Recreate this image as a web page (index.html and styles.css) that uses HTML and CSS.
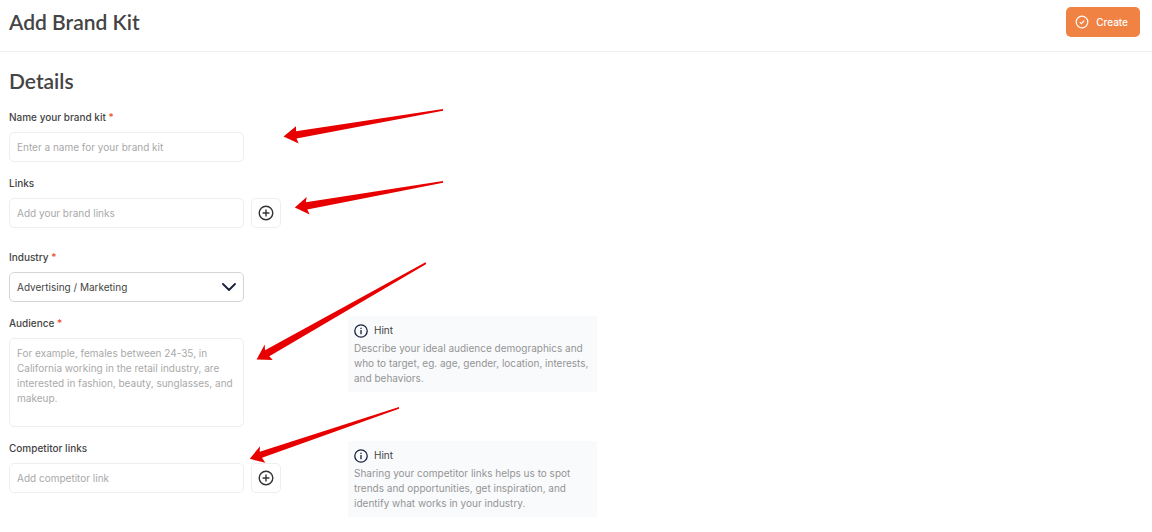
FILE: index.html
```html
<!DOCTYPE html>
<html lang="en">
<head>
    <meta charset="UTF-8">
    <meta name="viewport" content="width=device-width, initial-scale=1.0">
    <title>Add Brand Kit</title>
    <link rel="stylesheet" href="styles.css">
</head>
<body>
    <header class="topbar">
        <h1>Add Brand Kit</h1>
        <button type="submit" form="brand-kit" class="create">
            <svg width="14" height="14" viewBox="0 0 14 14" fill="none" stroke="currentColor" stroke-width="1.2">
                <circle cx="7" cy="7" r="5.8"/>
                <path d="M4.8 7.1l1.6 1.5 2.8-3"/>
            </svg>
            Create
        </button>
    </header>

    <main>
        <h2>Details</h2>
        <form id="brand-kit">
            <div class="row">
                <div class="field">
                    <label for="name">Name your brand kit <span class="required">*</span></label>
                    <input type="text" id="name" placeholder="Enter a name for your brand kit">
                </div>
            </div>

            <div class="row links">
                <div class="field">
                    <label for="links">Links</label>
                    <div class="with-add">
                        <input type="text" id="links" placeholder="Add your brand links">
                        <button type="button" class="add" aria-label="Add link">
                            <svg width="16" height="16" viewBox="0 0 16 16" fill="none" stroke="currentColor" stroke-width="1.4">
                                <circle cx="8" cy="8" r="6.8"/>
                                <path d="M8 4.6v6.8M4.6 8h6.8"/>
                            </svg>
                        </button>
                    </div>
                </div>
            </div>

            <div class="row">
                <div class="field">
                    <label for="industry">Industry <span class="required">*</span></label>
                    <div class="select">
                        <select id="industry">
                            <option>Advertising / Marketing</option>
                        </select>
                        <svg width="14" height="8" viewBox="0 0 14 8" fill="none" stroke="#18203a" stroke-width="1.8" stroke-linecap="round" stroke-linejoin="round">
                            <path d="M1 1l6 6 6-6"/>
                        </svg>
                    </div>
                </div>
            </div>

            <div class="row">
                <div class="field">
                    <label for="audience">Audience <span class="required">*</span></label>
                    <textarea id="audience" placeholder="For example, females between 24-35, in California working in the retail industry, are interested in fashion, beauty, sunglasses, and makeup."></textarea>
                </div>
                <aside class="hint">
                    <h3>
                        <svg width="14" height="14" viewBox="0 0 14 14" fill="none" stroke="currentColor" stroke-width="1.3">
                            <circle cx="7" cy="7" r="6.2"/>
                            <path d="M7 6v4.2M7 3.7v1.4"/>
                        </svg>
                        Hint
                    </h3>
                    <p>Describe your ideal audience demographics and who to target, eg. age, gender, location, interests, and behaviors.</p>
                </aside>
            </div>

            <div class="row">
                <div class="field">
                    <label for="competitors">Competitor links</label>
                    <div class="with-add">
                        <input type="text" id="competitors" placeholder="Add competitor link">
                        <button type="button" class="add" aria-label="Add competitor link">
                            <svg width="16" height="16" viewBox="0 0 16 16" fill="none" stroke="currentColor" stroke-width="1.4">
                                <circle cx="8" cy="8" r="6.8"/>
                                <path d="M8 4.6v6.8M4.6 8h6.8"/>
                            </svg>
                        </button>
                    </div>
                </div>
                <aside class="hint">
                    <h3>
                        <svg width="14" height="14" viewBox="0 0 14 14" fill="none" stroke="currentColor" stroke-width="1.3">
                            <circle cx="7" cy="7" r="6.2"/>
                            <path d="M7 6v4.2M7 3.7v1.4"/>
                        </svg>
                        Hint
                    </h3>
                    <p>Sharing your competitor links helps us to spot trends and opportunities, get inspiration, and identify what works in your industry.</p>
                </aside>
            </div>
        </form>
    </main>

    <!-- arrows pointing at the fields -->
    <svg class="arrows" width="460" height="480" viewBox="0 0 460 480" fill="#e80000" aria-hidden="true">
        <path d="M283.5 136.5L296 126.3V131.3L443 109V110.8L296.5 138.5L298.7 143.4Z"/>
        <path d="M294.8 207.6L306.7 197L305.8 202.3L443 181V182.8L307.3 209.5L309.7 214.5Z"/>
        <path d="M256.6 359.4L264.7 344.5L265 350.3L425.5 262.3L426.3 264L269.3 356.3L272.7 360Z"/>
        <path d="M249.8 458.8L260 446.2L259.7 451.7L399 407V408.8L262 457.7L265.3 462.8Z"/>
    </svg>
</body>
</html>
```
FILE: styles.css
```css
* {
    box-sizing: border-box;
}

body {
    margin: 0;
    font-family: 'Inter', sans-serif;
    font-size: 10px;
    color: #444;
    background-color: #fff;
}

h1, h2, h3, p {
    margin: 0;
}

h1, h2 {
    font-family: 'Lato', sans-serif;
    font-size: 21px;
    line-height: 28px;
    font-weight: 600;
}

/* header */
.topbar {
    display: flex;
    justify-content: space-between;
    align-items: center;
    padding: 7px 12px 14px 9px;
    border-bottom: 1px solid #eeeeee;
}

.create {
    display: flex;
    align-items: center;
    gap: 7px;
    height: 30px;
    padding: 0 12px 0 9px;
    border: 0;
    border-radius: 5px;
    background-color: #f08243;
    color: #fff;
    font: 500 10px 'Inter', sans-serif;
    cursor: pointer;
}

/* form */
main {
    padding: 15px 9px;
}

form {
    display: flex;
    flex-direction: column;
    gap: 13px;
    margin-top: 14px;
}

.row {
    display: flex;
    align-items: flex-start;
    gap: 67px;
}

.links {
    margin-bottom: 8px;
}

.field {
    display: flex;
    flex-direction: column;
    gap: 7px;
    width: 272px;
}

label {
    line-height: 16px;
    font-weight: 500;
}

.required {
    color: #f04a23;
}

input, select, textarea {
    display: block;
    width: 235px;
    height: 30px;
    padding: 0 7px;
    border: 1px solid #eeeef1;
    border-radius: 5px;
    background-color: #fff;
    color: #444;
    font: 10px 'Inter', sans-serif;
}

textarea {
    height: 89px;
    padding: 7px;
    line-height: 15px;
    resize: none;
}

::placeholder {
    color: #a9a9a9;
}

.with-add {
    display: flex;
    gap: 7px;
}

.add {
    display: flex;
    align-items: center;
    justify-content: center;
    width: 30px;
    height: 30px;
    padding: 0;
    border: 1px solid #eeeef1;
    border-radius: 5px;
    background-color: #fff;
    color: #333;
    cursor: pointer;
}

.select {
    display: grid;
    align-items: center;
    width: 235px;
}

.select select, .select svg {
    grid-area: 1 / 1;
}

.select select {
    appearance: none;
    border-color: #d5d5d5;
}

.select svg {
    justify-self: end;
    margin-right: 8px;
    pointer-events: none;
}

.hint {
    width: 249px;
    margin-top: 1px;
    padding: 7px 6px 6px;
    background-color: #f9fafc;
}

.hint h3 {
    display: flex;
    align-items: center;
    gap: 6px;
    font-size: 10px;
    font-weight: normal;
    line-height: 15px;
}

.hint h3 svg {
    color: #18203a;
}

.hint p {
    margin-top: 3px;
    line-height: 15px;
    color: #949494;
}

.arrows {
    position: absolute;
    top: 0;
    left: 0;
    pointer-events: none;
}
```
